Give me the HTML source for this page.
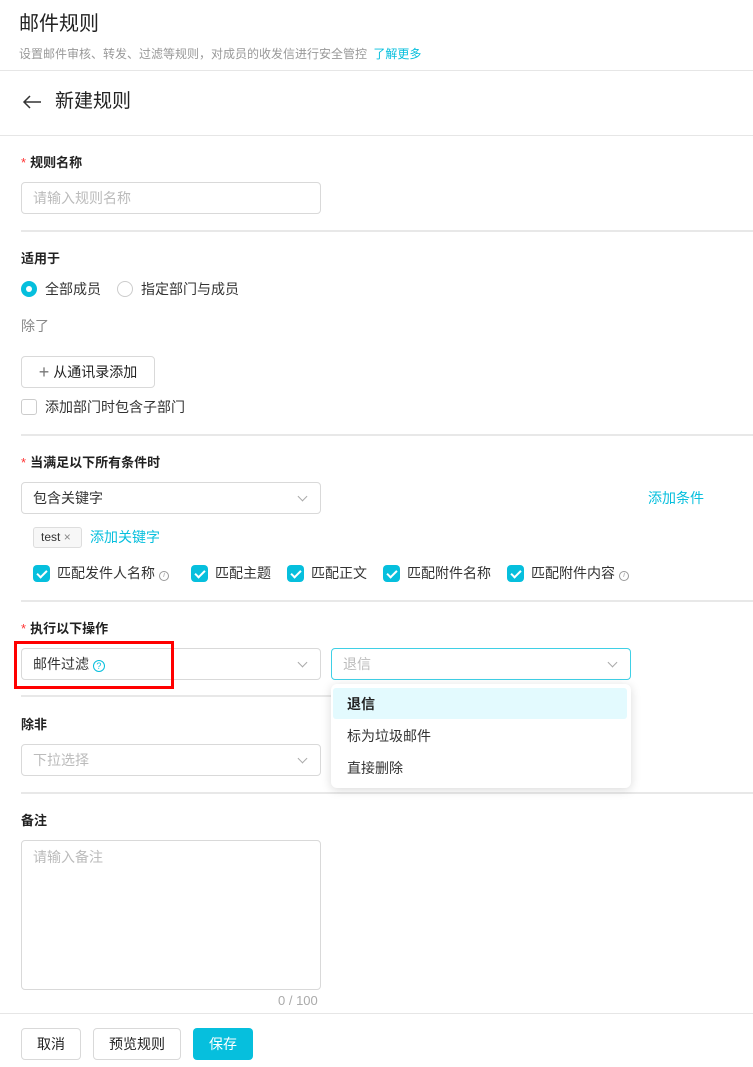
<!DOCTYPE html>
<html><head><meta charset="utf-8"><style>
*{box-sizing:border-box;margin:0;padding:0}
body{width:753px;height:1067px;background:#fff;font-family:"Liberation Sans","Noto Sans CJK SC",sans-serif;font-size:14px;line-height:18px;color:#333;position:relative;overflow:hidden}
.a{position:absolute;white-space:nowrap}
.hl{position:absolute;height:1px;background:#e6e6e6}
.sep{position:absolute;left:21px;right:0;height:2px;background:#e8e8e8}
.lbl{font-weight:bold;color:#222;font-size:13px}
.req{color:#f33;font-weight:normal;margin-right:4px}
.box{position:absolute;border:1px solid #d9d9d9;border-radius:4px;background:#fff}
.ph{color:#bbb}
.chev{position:absolute;width:7px;height:7px;border-right:1px solid #aaa;border-bottom:1px solid #aaa;transform:rotate(45deg)}
.cb{position:absolute;width:17px;height:17px;border-radius:4px;background:#06bfdd}
.cb::after{content:"";position:absolute;left:6px;top:3px;width:4px;height:8px;border-right:2px solid #fff;border-bottom:2px solid #fff;transform:rotate(45deg)}
.info{display:inline-block;width:10px;height:10px;border:1px solid #999;border-radius:50%;font-size:7px;line-height:8px;text-align:center;color:#999;vertical-align:1px;margin-left:4px;font-style:italic}
.btn{position:absolute;border:1px solid #d9d9d9;border-radius:4px;text-align:center;font-size:14px;color:#222;background:#fff}
</style></head><body>
<div class="a" style="left:19px;top:12px;font-size:20px;line-height:24px;color:#222">邮件规则</div>
<div class="a" style="left:19px;top:45px;font-size:12px;color:#999">设置邮件审核、转发、过滤等规则，对成员的收发信进行安全管控 <span style="color:#06bfdd;margin-left:3px">了解更多</span></div>
<div class="hl" style="left:0;right:0;top:70px"></div>
<svg class="a" style="left:22px;top:94px" width="20" height="16" viewBox="0 0 20 16"><path d="M19 8H2M8 2L2 8l6 6" stroke="#333" stroke-width="1.5" fill="none"/></svg>
<div class="a" style="left:55px;top:90px;font-size:19px;line-height:24px;color:#222">新建规则</div>
<div class="hl" style="left:0;right:0;top:135px"></div>

<div class="a lbl" style="left:21px;top:154px"><span class="req">*</span>规则名称</div>
<div class="box" style="left:21px;top:182px;width:300px;height:32px"><span class="a ph" style="left:11px;top:6px">请输入规则名称</span></div>
<div class="sep" style="top:230px"></div>

<div class="a lbl" style="left:21px;top:250px">适用于</div>
<div class="a" style="left:21px;top:281px;width:16px;height:16px;border-radius:50%;background:#06bfdd"><div style="position:absolute;left:5px;top:5px;width:6px;height:6px;border-radius:50%;background:#fff"></div></div>
<div class="a" style="left:45px;top:280px">全部成员</div>
<div class="a" style="left:117px;top:281px;width:16px;height:16px;border-radius:50%;border:1px solid #ccc"></div>
<div class="a" style="left:141px;top:280px">指定部门与成员</div>
<div class="a" style="left:21px;top:317px;color:#888">除了</div>
<div class="btn" style="left:21px;top:356px;width:134px;height:32px;line-height:30px"><span style="font-size:18px;color:#777;vertical-align:-1px">+</span> 从通讯录添加</div>
<div class="a" style="left:21px;top:399px;width:16px;height:16px;border-radius:3px;border:1px solid #ccc"></div>
<div class="a" style="left:45px;top:398px">添加部门时包含子部门</div>
<div class="sep" style="top:434px"></div>

<div class="a lbl" style="left:21px;top:454px"><span class="req">*</span>当满足以下所有条件时</div>
<div class="box" style="left:21px;top:482px;width:300px;height:32px"><span class="a" style="left:11px;top:6px">包含关键字</span><div class="chev" style="right:14px;top:10px"></div></div>
<div class="a" style="left:648px;top:489px;color:#06bfdd">添加条件</div>
<div class="a" style="left:33px;top:527px;width:49px;height:21px;border:1px solid #ddd;border-radius:3px;background:#f7f7f7;font-size:12px;line-height:19px;padding-left:7px">test <span style="color:#888">×</span></div>
<div class="a" style="left:90px;top:528px;color:#06bfdd">添加关键字</div>
<div class="cb" style="left:33px;top:565px"></div><div class="a" style="left:57px;top:564px">匹配发件人名称<span class="info">i</span></div>
<div class="cb" style="left:191px;top:565px"></div><div class="a" style="left:215px;top:564px">匹配主题</div>
<div class="cb" style="left:287px;top:565px"></div><div class="a" style="left:311px;top:564px">匹配正文</div>
<div class="cb" style="left:383px;top:565px"></div><div class="a" style="left:407px;top:564px">匹配附件名称</div>
<div class="cb" style="left:507px;top:565px"></div><div class="a" style="left:531px;top:564px">匹配附件内容<span class="info">i</span></div>
<div class="sep" style="top:600px"></div>

<div class="a lbl" style="left:21px;top:620px"><span class="req">*</span>执行以下操作</div>
<div class="box" style="left:21px;top:648px;width:300px;height:32px"><span class="a" style="left:11px;top:6px">邮件过滤 <span style="display:inline-block;width:12px;height:12px;border:1px solid #06bfdd;border-radius:50%;color:#06bfdd;font-size:9px;line-height:10px;text-align:center;vertical-align:0">?</span></span><div class="chev" style="right:14px;top:10px"></div></div>
<div class="a" style="left:14px;top:641px;width:160px;height:48px;border:3px solid #f00"></div>
<div class="box" style="left:331px;top:648px;width:300px;height:32px;border-color:#3fd0e6"><span class="a ph" style="left:11px;top:6px">退信</span><div class="chev" style="right:14px;top:10px"></div></div>
<div class="sep" style="top:695px;right:122px"></div>

<div class="a lbl" style="left:21px;top:716px">除非</div>
<div class="box" style="left:21px;top:744px;width:300px;height:32px"><span class="a ph" style="left:11px;top:6px">下拉选择</span><div class="chev" style="right:14px;top:10px"></div></div>
<div class="sep" style="top:792px"></div>

<div class="a" style="left:331px;top:684px;width:300px;height:104px;background:#fff;border-radius:6px;box-shadow:0 2px 10px rgba(0,0,0,.15)">
<div class="a" style="left:2px;top:4px;width:294px;height:31px;background:#e3fafe;border-radius:3px"></div>
<div class="a" style="left:16px;top:11px;font-weight:bold;color:#222">退信</div>
<div class="a" style="left:16px;top:43px">标为垃圾邮件</div>
<div class="a" style="left:16px;top:75px">直接删除</div>
</div>

<div class="a lbl" style="left:21px;top:812px">备注</div>
<div class="box" style="left:21px;top:840px;width:300px;height:150px"><span class="a ph" style="left:11px;top:7px">请输入备注</span></div>
<div class="a" style="left:278px;top:992px;color:#aaa;font-size:13px">0 / 100</div>
<div class="hl" style="left:0;right:0;top:1013px"></div>
<div class="btn" style="left:21px;top:1028px;width:60px;height:32px;line-height:30px">取消</div>
<div class="btn" style="left:93px;top:1028px;width:88px;height:32px;line-height:30px">预览规则</div>
<div class="btn" style="left:193px;top:1028px;width:60px;height:32px;line-height:32px;background:#06bfdd;border:none;color:#fff">保存</div>
</body></html>
